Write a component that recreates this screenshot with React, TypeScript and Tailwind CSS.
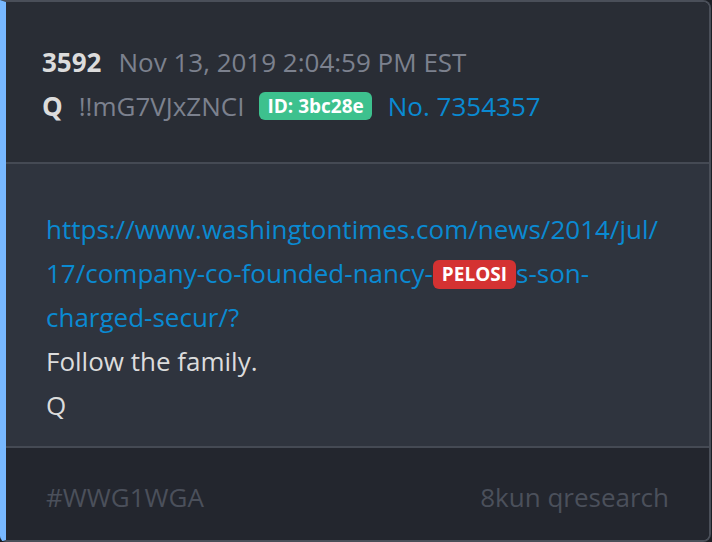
export default function App() {
  return (
    <div className="w-[712px] h-[542px] bg-[#1c1f25] font-['Open_Sans',sans-serif]">
      <div className="flex flex-col h-[542px] w-[711px] overflow-hidden rounded-r-[8px] rounded-bl-[6px] border-t-2 border-r-2 border-b-2 border-[#4a4f59] border-l-[6px] border-l-[#78b8ff]">
        {/* header */}
        <div className="h-[162px] bg-[#292d35] pl-[36px] pt-[42px] border-b-2 border-[#454a54]">
          <div className="flex items-baseline gap-[17px] text-[26px] leading-[36px]">
            <span className="font-bold text-[#dcdcdc]">3592</span>
            <span className="text-[#7c818e]">Nov 13, 2019 2:04:59 PM EST</span>
          </div>
          <div className="flex items-center mt-[8px] text-[26px] leading-[36px]">
            <span className="font-bold text-[#dcdcdc]">Q</span>
            <span className="ml-[16px] text-[#7c818e]">!!mG7VJxZNCI</span>
            <span className="ml-[15px] h-[28px] px-[8px] rounded-[6px] bg-[#3dc18e] text-white font-bold text-[19px] leading-[28px]">
              ID: 3bc28e
            </span>
            <span className="ml-[16px] text-[#0a8ad2]">No. 7354357</span>
          </div>
        </div>
        {/* body */}
        <div className="h-[284px] bg-[#2f343e] pl-[40px] pr-[30px] pt-[43px] border-b-2 border-[#454a54] text-[26px] leading-[44px]">
          <div className="text-[#0a8ad2] break-all">
            https://www.washingtontimes.com/news/2014/jul/
            <br />
            17/company-co-founded-nancy-
            <span className="inline-block h-[29px] px-[9px] rounded-[6px] bg-[#d43232] text-white font-bold text-[19px] leading-[29px] align-[2px]">
              PELOSI
            </span>
            s-son-
            <br />
            charged-secur/?
          </div>
          <div className="text-[#dcdcdc]">Follow the family.</div>
          <div className="text-[#dcdcdc]">Q</div>
        </div>
        {/* footer */}
        <div className="flex-1 bg-[#23262e] flex items-center justify-between pl-[40px] pr-[40px] pt-[6px] text-[26px] text-[#4b505b]">
          <span>#WWG1WGA</span>
          <span>8kun qresearch</span>
        </div>
      </div>
    </div>
  );
}
